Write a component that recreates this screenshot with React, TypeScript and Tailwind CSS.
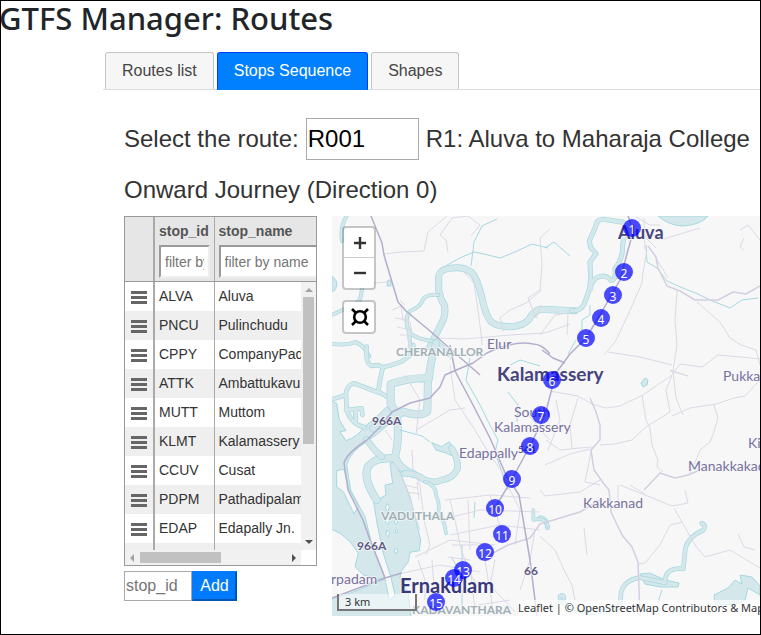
type Stop = { id: string; name: string };

const stops: Stop[] = [
  { id: "ALVA", name: "Aluva" },
  { id: "PNCU", name: "Pulinchudu" },
  { id: "CPPY", name: "CompanyPady" },
  { id: "ATTK", name: "Ambattukavu" },
  { id: "MUTT", name: "Muttom" },
  { id: "KLMT", name: "Kalamassery" },
  { id: "CCUV", name: "Cusat" },
  { id: "PDPM", name: "Pathadipalam" },
  { id: "EDAP", name: "Edapally Jn." },
  { id: "CGPP", name: "Changampuzha" },
];

// Stop positions on the map pane
const pins = [
  [300, 12], [292, 56], [281, 79], [269, 102], [254, 122],
  [220, 164], [209, 199], [198, 230], [180, 263], [163, 292],
  [170, 318], [153, 336], [131, 354], [122, 362], [104, 386],
];

function Tabs() {
  const plain = "h-[37px] rounded-t-[3px] border border-b-0 border-[#c5c5c5] bg-[#f6f6f6] px-4 text-[#454545]";
  return (
    <div role="tablist" className="ml-[102px] flex gap-[3px] border-b border-[#dddddd] pl-0.5 text-base">
      <button role="tab" className={plain}>Routes list</button>
      <button role="tab" aria-selected="true" className="-mb-px h-[38px] rounded-t-[3px] border border-[#003eff] border-b-[#007fff] bg-[#007fff] px-4 text-white">
        Stops Sequence
      </button>
      <button role="tab" className={plain}>Shapes</button>
    </div>
  );
}

function Columns() {
  return (
    <colgroup>
      <col className="w-[29px]" />
      <col className="w-[60px]" />
      <col />
    </colgroup>
  );
}

function StopsTable() {
  const filter = "mt-1 block h-[33px] border-2 border-[#eeeeee] border-t-[#9a9a9a] border-l-[#9a9a9a] bg-white px-1 text-sm placeholder:text-[#757575] outline-none";
  return (
    <div className="h-[350px] overflow-hidden border border-[#999999] bg-white text-sm text-[#333333]">
      <div className="overflow-hidden border-b border-[#999999] bg-[#e6e6e6]">
        <table className="w-full table-fixed border-collapse">
          <Columns />
          <thead>
            <tr className="h-16 text-left align-top text-[#555555]">
              <th className="border-r-2 border-[#aaaaaa]" />
              <th className="border-r border-[#aaaaaa] px-1 pt-1">
                <label htmlFor="filter-id">stop_id</label>
                <input id="filter-id" placeholder="filter by id" className={`${filter} w-[51px] font-normal`} />
              </th>
              <th className="px-1 pt-1">
                <label htmlFor="filter-name">stop_name</label>
                <input id="filter-name" placeholder="filter by name" className={`${filter} w-[120px] font-normal`} />
              </th>
            </tr>
          </thead>
        </table>
      </div>
      <div className="grid grid-cols-[1fr_15px] grid-rows-[268px_15px]">
        <div className="overflow-hidden">
          <table className="w-full table-fixed border-collapse">
            <Columns />
            <tbody>
              {stops.map((s) => (
                <tr key={s.id} className="h-[29px] even:bg-[#efefef]">
                  <td className="border-r-2 border-[#aaaaaa]">
                    <Handle />
                  </td>
                  <td className="border-r border-[#aaaaaa] px-1 pb-0.5">{s.id}</td>
                  <td className="overflow-hidden pb-0.5 pl-1 whitespace-nowrap">{s.name}</td>
                </tr>
              ))}
            </tbody>
          </table>
        </div>
        <div className="flex flex-col items-center justify-between bg-[#f1f1f1] py-1.5">
          <div className="flex flex-col items-center gap-[5px]">
            <span className="border-x-4 border-b-4 border-x-transparent border-b-[#a3a3a3]" />
            <span className="h-[147px] w-[11px] bg-[#c1c1c1]" />
          </div>
          <span className="border-x-4 border-t-4 border-x-transparent border-t-[#505050]" />
        </div>
        <div className="flex items-center justify-between bg-[#f1f1f1] px-[5px]">
          <div className="flex items-center gap-1.5">
            <span className="border-y-4 border-r-4 border-y-transparent border-r-[#a3a3a3]" />
            <span className="h-[11px] w-[81px] bg-[#c1c1c1]" />
          </div>
          <span className="border-y-4 border-l-4 border-y-transparent border-l-[#505050]" />
        </div>
      </div>
    </div>
  );
}

function Handle() {
  return (
    <svg viewBox="0 0 16 13" className="mx-auto mt-0.5 h-[13px] w-4" fill="#666666" aria-hidden="true">
      <path d="M0 0h16v3H0zM0 5h16v3H0zM0 10h16v3H0z" />
    </svg>
  );
}

const rivers: { d: string; w: number; at: string }[] = [
  { at: "translate(330 215)", w: 17, d: "M735 287L630 283Q608 290 598 312Q580 333 545 335Q500 335 483 320Q466 300 455 245Q442 190 425 172Q400 155 370 159Q325 160 326 190V225Q330 250 343 270Q350 300 332 330Q320 355 300 395" },
  { at: "translate(330 215)", w: 11, d: "M880 22L830 14Q800 8 797 35L778 78L782 98L798 116L780 140L782 190L778 225L762 268Q750 290 725 287M780 225Q785 190 810 184Q830 180 843 196Q860 195 855 160Q880 130 878 90L888 40" },
  { at: "translate(330 215)", w: 8, d: "M50 3Q30 35 36 78M96 215Q95 255 80 265Q50 280 6 300M325 240Q290 235 278 255Q273 275 240 288Q222 310 235 345Q245 370 315 380Q340 390 355 420M235 340L245 420M6 386Q50 393 75 381Q90 385 103 400L118 425" },
  { at: "translate(330 340)", w: 10, d: "M110 20Q105 70 125 78Q150 70 158 85Q150 115 145 155L180 175M158 82Q190 75 215 65L248 40L250 15M48 170Q45 140 70 130Q100 140 145 158M6 178L48 165L50 210Q65 255 105 262M48 210L95 205L97 225M75 210L78 240" },
  { at: "translate(330 340)", w: 20, d: "M318 10Q300 70 297 115Q240 112 182 132V190Q198 215 202 240Q208 300 195 352Q210 390 250 402M294 115L292 215Q270 232 220 215L130 265M190 355Q135 352 115 378Q100 405 125 455L140 480" },
  { at: "translate(330 340)", w: 16, d: "M225 400Q260 400 280 418Q310 432 335 420Q370 415 383 385Q385 355 365 325M110 298Q130 330 155 350" },
  { at: "translate(540 485)", w: 10, d: "M232 375Q243 355 243 325Q250 285 300 278L375 293Q375 245 430 252L436 190Q445 155 490 135Q500 120 485 115M60 335Q70 325 72 340M60 345Q90 380 160 383L235 370M0 98Q20 100 22 128" },
  { at: "translate(330 340)", w: 7, d: "M285 425Q318 435 318 465Q330 490 325 515Q345 545 348 580M610 510V540Q645 530 655 560" },
];

function MapDrawing() {
  return (
    <svg viewBox="332 216 428 400" preserveAspectRatio="xMinYMin slice" className="block h-full w-full" aria-label="Map of Kochi" role="img">
      <rect x="332" y="216" width="428" height="400" fill="#f7f7f8" />
      {/* water bodies */}
      <g fill="#d4e8ec" stroke="#a5d8df" strokeWidth="1">
        <path d="M658 216Q668 225 682 226Q701 225 708 216Z" />
        <path d="M332 276Q340 282 335 290L332 292Z" />
        <path d="M388 280h3v6h-4zM641 383l4-5 3 2-1 5-4 2z" />
        <path d="M640 574L650 573L665 580L679 583L678 587H660L645 584Z" />
        <path d="M714 595L728 588L735 580L742 584L740 575L752 577L760 586V595L748 588L745 600L736 604L715 605Z" />
      </g>
      <g transform="translate(330 340) scale(.3333)" fill="#d4e8ec" stroke="#a5d8df" strokeWidth="3">
        <path d="M0 180L20 190L28 240L48 272L30 275L48 302Q85 290 100 262L130 240L170 200L200 225Q170 265 110 305Q60 335 50 375L62 450L105 530L125 610L165 712L150 718L100 705L75 680L85 640L60 605L30 580L0 565Z" />
        <path d="M0 778L60 760L165 717L178 782L195 765L183 712L160 640L143 560L128 470L150 475L168 465L165 435L188 430L180 370L198 365L240 470L272 600L268 632L240 637L235 665L213 695L210 715L235 760L243 830H0Z" />
        <path d="M305 308L335 320L358 305L370 325L372 350L345 338L318 330Z" />
      </g>
      {/* rivers, banks first and then the channel */}
      {rivers.map((r) => (
        <g key={r.d} transform={r.at} fill="none" strokeLinecap="round" strokeLinejoin="round">
          <g transform="scale(.3333)">
            <path d={r.d} stroke="#a5d8df" strokeWidth={r.w + 4} />
            <path d={r.d} stroke="#d4e8ec" strokeWidth={r.w} />
          </g>
        </g>
      ))}
      {/* islands */}
      <g transform="translate(330 340) scale(.3333)" fill="#f7f7f8" stroke="#a5d8df" strokeWidth="3">
        <path d="M20 392L42 388L58 450L85 500L72 522L40 455L20 440Z" />
        <path d="M172 490l6 10-4 16-8-12zM168 530l10 6-2 18-9-6zM195 540l8 4-4 10-6-4zM170 570l8 8-2 14-8-8zM198 568l6 4-4 8-5-4zM195 625l8 4-3 12-7-6z" />
      </g>
      {/* small streams */}
      <g fill="none" stroke="#a5d8df" strokeWidth="1">
        <path d="M447 265L462 257L474 252L484 254L500 258L515 252L532 244L548 248M471 266L474 242L482 226L497 219M545 248L554 242L570 256" />
        <path d="M646 245L647 262L657 268L667 281L685 289L698 294L710 300L730 308L742 300L758 298" />
        <path d="M590 305L590 315L582 320V330M568 354L576 340M470 358L466 380L480 405L490 425L498 440L495 452L508 490M510 365L520 360L540 366M508 392L518 405L517 422" />
        <path d="M475 502L474 518M400 430L422 436L430 442M662 590L658 602M452 558L460 572M462 545V610" />
      </g>
      {/* minor roads */}
      <g fill="none" stroke="#dcd9e5" strokeWidth="1" strokeLinejoin="round">
        <path d="M384 254L400 252L424 251L428 232L447 216M448 252L446 240L440 235L452 218L468 216L480 225L471 236M374 283L388 282M462 270L474 283L478 310L481 333L482 345M504 332L500 318L510 310L526 303L542 290M540 290L528 298L536 318L541 305M540 290L542 265L540 238L550 229M436 338L465 339L510 335L545 333L570 324" />
        <path d="M392 310L401 306L403 320L410 322L412 334M395 318L408 320M397 327L412 330M405 305L400 300M400 335L408 335L409 348" />
        <path d="M647 250L643 272L642 283L628 315L615 342L604 355M677 291L675 320L677 345L673 371L676 398L683 415M697 302L720 322L730 338L741 345L756 350L760 365M608 352L640 357L672 365M670 371L688 376L670 370" />
        <path d="M550 391L578 396L592 404L606 408L620 406L643 395L656 386L671 376L680 364L702 367L718 355L740 357L760 359M642 395L646 420L650 428L652 445L658 460L657 467L663 472M672 376L666 390L670 412L646 427L632 440L614 444L600 445M672 416L690 408L716 404L734 398L745 396L760 380M714 405L718 418L714 432L710 442L700 450L696 460L690 473M546 440L560 450L580 448L591 447M578 398L570 425L572 448M592 447L585 482L600 485M545 465L570 454L590 449" />
        <path d="M540 490L545 496L580 492L600 480M620 485L650 497L672 506L688 503L685 490M674 508L682 522L670 525L660 545L645 563L638 564M682 522L695 545L705 557L730 550L760 568M540 536L555 550L565 572L572 585L576 605M584 528L587 555M618 485V500M630 485L645 494M738 534L744 547L755 550" />
        <path d="M450 365L455 400L475 430L482 442L490 455L508 480M416 435L420 400L405 375M416 430L450 410L465 408M412 450L413 470L420 485L424 520L430 545L426 555M394 462L405 485L410 500L420 530M445 500L490 495L530 498M440 520L480 510L540 512M450 535L500 525L540 530M450 500L455 520L460 545L468 570L480 590M468 500L470 550M490 495L498 520L505 540M505 480L520 510L515 545M452 545L478 545M448 557L470 560M415 557L450 540L495 545M403 573L440 565L480 572M432 560L435 600M495 560L490 585L515 612M535 530L530 560L520 590M418 560L425 580L425 600M478 605L510 600M470 565L475 610M485 560L493 610" />
        <path d="M744 238L740 247L744 250M548 450L560 420L556 400M540 335L555 315L568 313L567 335M455 350L450 360M385 430L392 440M660 240L700 228M740 230L748 225L760 240M405 485l12 3M406 492l14 2M417 482l2 18M524 410L545 435L550 440" />
        <path d="M636 217L650 225H660M635 225L648 240L656 248M644 218L645 250M635 237L660 235M650 248L668 278" />
      </g>
      {/* secondary roads */}
      <g fill="none" stroke="#d3cfdf" strokeWidth="1.5" strokeLinejoin="round">
        <path d="M648 246L656 257L658 268L667 286L680 291L695 300L718 300L733 292L746 294L760 286M590 398L596 412L600 425L600 440L591 450L594 470L604 484L609 490L611 512L622 535L632 547L638 562L640 616M644 490L660 473L675 478L688 475L700 470M480 560L508 545L530 538L540 524L580 512L600 500" />
      </g>
      {/* trunk roads and rail line */}
      <g fill="none" stroke="#b3aecb" strokeWidth="1.5" strokeLinejoin="round">
        <path d="M371 216L382 243L384 255L392 282L398 302L406 311L430 331L455 353L480 375M450 345L455 371L473 405L490 438L506 475L519 495L530 560L537 616M542 350L553 358L565 363" />
        <path d="M628 216Q635 230 628 250L620 280L600 315L586 338L570 354L556 373L545 415L530 446L512 479" />
        <path d="M332 598L385 578L402 573M512 479L495 508" />
        <path d="M385 578L370 540L363 520L348 490L344 463Q347 453 367 440L380 427L392 412L410 403L430 398L440 387L445 375L454 371L473 363L487 353Q515 340 533 344Q542 344 550 354" />
      </g>
      {/* place names */}
      <g fontFamily="Lato, sans-serif" stroke="#f7f7f8" strokeOpacity=".8" strokeWidth="2" paintOrder="stroke" strokeLinejoin="round">
        <g fill="#46437d" fontWeight="700">
          <text x="618" y="239" fontSize="18">Aluva</text>
          <text x="497" y="381" fontSize="19">Kalamassery</text>
          <text x="400" y="593" fontSize="20" fill="#38387a">Ernakulam</text>
          <g fontSize="12" fill="#5d5a83">
            <text x="372" y="425">966A</text>
            <text x="357" y="550">966A</text>
            <text x="524" y="575">66</text>
            <text x="518" y="453" fontSize="10">544</text>
          </g>
        </g>
        <g fill="#77729e" fontSize="14">
          <text x="487" y="349">Elur</text>
          <text x="514" y="417">South</text>
          <text x="494" y="432">Kalamassery</text>
          <text x="459" y="458">Edappally</text>
          <text x="583" y="508">Kakkanad</text>
          <text x="688" y="471">Manakkakadavu</text>
          <text x="723" y="381">Pukkattupady</text>
          <text x="748" y="448">Kizhakkambalam</text>
          <text x="331" y="584">rpadam</text>
        </g>
        <g fill="#a1b0b4" fontSize="12" fontWeight="700">
          <text x="396" y="356">CHERANALLOR</text>
          <text x="381" y="520">VADUTHALA</text>
          <text x="412" y="614">KADAVANTHARA</text>
        </g>
      </g>
    </svg>
  );
}

function RouteMap() {
  const control = "flex h-[30px] w-[30px] items-center justify-center bg-white";
  return (
    <div className="relative h-[400px] min-w-0 flex-1 overflow-hidden font-['Noto_Sans',sans-serif]">
      <MapDrawing />
      {pins.map(([x, y], i) => (
        <button
          key={i}
          style={{ left: x, top: y }}
          className="absolute flex size-[18px] -translate-x-1/2 -translate-y-1/2 items-center justify-center rounded-full bg-[#0000ff]/70 pt-[3px] text-xs leading-none text-white"
        >
          {i + 1}
        </button>
      ))}
      <div className="absolute top-2.5 left-2.5 flex flex-col gap-2.5 text-black">
        <div className="rounded border-2 border-black/20 bg-clip-padding">
          <button aria-label="Zoom in" className={`${control} rounded-t-sm border-b border-[#cccccc]`}>
            <svg viewBox="0 0 12 12" className="ml-0.5 size-3" stroke="#333333" strokeWidth="2.4"><path d="M6 0v12M0 6h12" /></svg>
          </button>
          <button aria-label="Zoom out" className={`${control} rounded-b-sm`}>
            <svg viewBox="0 0 12 12" className="ml-0.5 size-3" stroke="#333333" strokeWidth="2.4"><path d="M0 6h12" /></svg>
          </button>
        </div>
        <div className="rounded border-2 border-black/20 bg-clip-padding">
          <button aria-label="Fit route" className={`${control} rounded-sm`}>
            <svg viewBox="0 0 18 18" className="ml-0.5 size-[18px]" fill="none" stroke="#000000" strokeWidth="2.6">
              <circle cx="9" cy="9" r="5.8" />
              <path d="M1 1l4 4M17 1l-4 4M1 17l4-4M17 17l-4-4" />
            </svg>
          </button>
        </div>
      </div>
      <div className="absolute bottom-[5px] left-[5px] h-[17px] w-20 border-2 border-t-0 border-[#777777] bg-white/50 pl-1.5 text-[11px] leading-4 text-[#333333]">
        3 km
      </div>
      <div className="absolute bottom-0 left-[186px] bg-white/70 text-[11px] leading-4 whitespace-nowrap text-[#333333]">
        <a href="#leaflet">Leaflet</a> | © <a href="#osm">OpenStreetMap</a> Contributors &amp; Mapbox
      </div>
    </div>
  );
}

export default function App() {
  return (
    <div className="min-h-screen overflow-hidden border border-black bg-white font-['Liberation_Sans',Arial,sans-serif]">
      <h1 className="mb-4 -ml-0.5 font-['Noto_Sans',sans-serif] text-[31px] leading-[35px] font-medium text-[#212529]">
        GTFS Manager: Routes
      </h1>
      <Tabs />
      <main className="pt-7 pl-[123px] text-[#333333]">
        <div className="flex items-center gap-[7px] text-2xl whitespace-nowrap">
          <label htmlFor="route">Select the route:</label>
          <input id="route" defaultValue="R001" className="h-[42px] w-[113px] border border-[#a9a9a9] bg-white px-px text-black outline-none" />
          <span>R1: Aluva to Maharaja College</span>
        </div>
        <h2 className="mt-3 mb-2 text-2xl leading-9">Onward Journey (Direction 0)</h2>
        <div className="flex gap-[15px]">
          <div className="w-[193px] shrink-0">
            <StopsTable />
            <form className="mt-[5px] flex h-[30px]">
              <input aria-label="stop_id" placeholder="stop_id" className="w-[68px] border border-[#a9a9a9] px-px text-base placeholder:text-[#757575] outline-none" />
              <button type="button" className="w-[45px] border-2 border-[#007bff] border-r-[#0056b3] border-b-[#0056b3] bg-[#007bff] text-base leading-none text-white">
                Add
              </button>
            </form>
          </div>
          <RouteMap />
        </div>
      </main>
    </div>
  );
}
